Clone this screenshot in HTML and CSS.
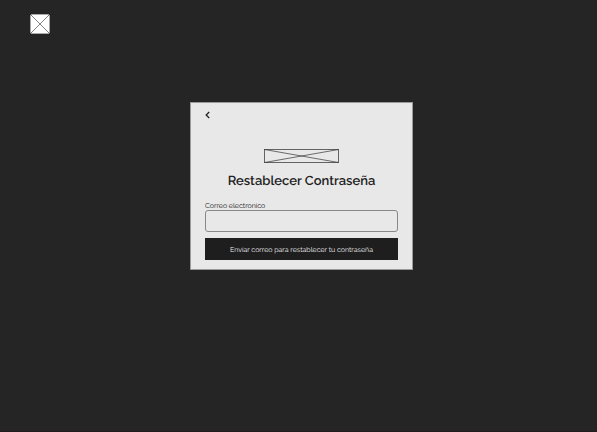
FILE: index.html
```html
<!DOCTYPE html>
<html lang="es">
<head>
  <meta charset="utf-8">
  <meta name="viewport" content="width=device-width, initial-scale=1">
  <title>Restablecer Contraseña</title>
  <link rel="stylesheet" href="styles.css">
</head>
<body>
  <header class="topbar">
    <a class="home" href="#" aria-label="Inicio">
      <svg viewBox="0 0 20 20" aria-hidden="true">
        <rect x=".5" y=".5" width="19" height="19" rx="1.5" fill="#fff" stroke="#aaa"/>
        <path d="M1 1 19 19M19 1 1 19" stroke="#666" stroke-width=".8"/>
      </svg>
    </a>
  </header>
  <main class="page">
    <form class="card">
      <a class="back" href="#" aria-label="Volver">
        <svg viewBox="0 0 5 8" aria-hidden="true">
          <path d="M4.2 1 1.2 4l3 3" fill="none" stroke="#222" stroke-width="1.3"/>
        </svg>
      </a>
      <svg class="logo" viewBox="0 0 75 14" aria-hidden="true">
        <rect x=".5" y=".5" width="74" height="13" fill="none" stroke="#555" stroke-width=".9"/>
        <path d="M.5.5 74.5 13.5M74.5.5.5 13.5" stroke="#333" stroke-width=".7"/>
      </svg>
      <h1 class="title">Restablecer Contraseña</h1>
      <label class="label" for="email">Correo electronico</label>
      <input class="field" id="email" type="email">
      <button class="submit" type="submit">Enviar correo para restablecer tu contraseña</button>
    </form>
  </main>
</body>
</html>
```
FILE: styles.css
```css
* {
  box-sizing: border-box;
}

body {
  margin: 0;
  min-height: 100vh;
  background: #252525;
  color: #222;
  font-family: Raleway, Lato, "Open Sans", sans-serif;
  text-rendering: geometricPrecision;
  border-bottom: 1px solid #211b1f;
}

.topbar {
  display: flex;
  padding: 14px 30px 0;
}

.home svg {
  display: block;
  width: 20px;
  height: 20px;
}

.page {
  display: flex;
  justify-content: center;
  padding: 68px 0 24px 6px;
}

.card {
  display: flex;
  flex-direction: column;
  width: 100%;
  max-width: 223px;
  padding: 8px 14px 9px;
  border: 1px solid #999;
  background: #e8e8e8;
}

.back {
  align-self: flex-start;
}

.back svg {
  display: block;
  width: 5px;
  height: 8px;
}

.logo {
  align-self: center;
  width: 75px;
  height: 14px;
  margin-top: 30px;
}

.title {
  margin: 9px 0 10px;
  font-size: 13px;
  line-height: 20px;
  font-weight: 600;
  text-align: center;
  white-space: nowrap;
}

.label {
  color: #111;
  font-size: 7px;
  line-height: 8px;
}

.field {
  width: 100%;
  height: 22px;
  padding: 0 6px;
  border: 1px solid #888;
  border-radius: 3px;
  background: transparent;
  font: inherit;
  font-size: 7px;
}

.submit {
  height: 22px;
  margin-top: 6px;
  padding: 0;
  border: 0;
  background: #1e1e1e;
  color: #eee;
  font: inherit;
  font-size: 7px;
  text-rendering: inherit;
}
```
